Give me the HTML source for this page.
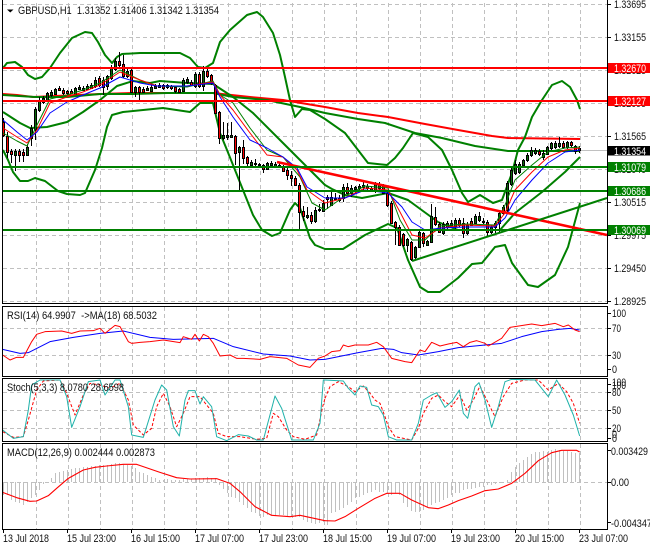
<!DOCTYPE html>
<html><head><meta charset="utf-8"><style>
html,body{margin:0;padding:0;background:#fff;width:650px;height:550px;overflow:hidden}
svg{display:block}
text{font-family:"Liberation Sans",sans-serif;font-size:11px;fill:#111}
.g{stroke:#c0c0c0;stroke-width:1;stroke-dasharray:4 3;fill:none}
.f{fill:none;stroke-linejoin:round}
</style></head><body>
<svg width="650" height="550" viewBox="0 0 650 550" xmlns="http://www.w3.org/2000/svg">
<rect width="650" height="550" fill="#fff"/>
<!-- vertical grid -->
<path class="g" d="M36.5 3V303M68.5 3V303M100.5 3V303M132.5 3V303M164.5 3V303M196.5 3V303M228.5 3V303M260.5 3V303M292.5 3V303M324.5 3V303M356.5 3V303M388.5 3V303M420.5 3V303M452.5 3V303M484.5 3V303M516.5 3V303M548.5 3V303M580.5 3V303"/>
<path class="g" d="M36.5 307V376M68.5 307V376M100.5 307V376M132.5 307V376M164.5 307V376M196.5 307V376M228.5 307V376M260.5 307V376M292.5 307V376M324.5 307V376M356.5 307V376M388.5 307V376M420.5 307V376M452.5 307V376M484.5 307V376M516.5 307V376M548.5 307V376M580.5 307V376"/>
<path class="g" d="M36.5 380V441M68.5 380V441M100.5 380V441M132.5 380V441M164.5 380V441M196.5 380V441M228.5 380V441M260.5 380V441M292.5 380V441M324.5 380V441M356.5 380V441M388.5 380V441M420.5 380V441M452.5 380V441M484.5 380V441M516.5 380V441M548.5 380V441M580.5 380V441"/>
<path class="g" d="M36.5 444V529M68.5 444V529M100.5 444V529M132.5 444V529M164.5 444V529M196.5 444V529M228.5 444V529M260.5 444V529M292.5 444V529M324.5 444V529M356.5 444V529M388.5 444V529M420.5 444V529M452.5 444V529M484.5 444V529M516.5 444V529M548.5 444V529M580.5 444V529"/>
<!-- horizontal grid -->
<path class="g" d="M3 4.5H607M3 37.5H607M3 70.5H607M3 103.5H607M3 136.5H607M3 169.5H607M3 202.5H607M3 235.5H607M3 268.5H607M3 301.5H607M3 328.5H607M3 355.5H607M3 392.5H607M3 410.5H607M3 428.5H607M3 441.5H607M3 482.5H607"/>
<path d="M3 150.5H607" stroke="#c0c0c0" stroke-width="1" fill="none"/>

<!-- long MA red sits under the green one on the left -->
<polyline class="f" stroke="#ff0000" stroke-width="2" points="3,94 17,95 33,97 100,94 133,93 213,93 250,97 283,100 325,107 358,113 388,117 425,124 458,130 492,136 508,138 580,139"/>
<!-- main curves -->
<g class="f" stroke="#008000" stroke-width="2">
<polyline class="f" points="3,68 7,63 15,62 22,67 28,75 35,79 42,77 50,68 60,53 72,38 85,32 92,33 98,42 105,55 112,63 117,57 122,54 140,53 180,53 190,58 198,67 205,68 213,63 220,42 230,30 247,15 257,12 263,17 273,33 280,55 285,77 290,100 295,117 302,109 310,110 325,119 345,133 358,150 368,163 387,165 395,158 403,148 413,133 428,137 442,150 452,170 462,193 468,202 480,195 493,203 502,200 512,173 518,150 525,137 532,117 542,100 552,85 562,81 570,87 577,100 580,109"/>
<polyline class="f" points="3,150 8,160 13,172 20,181 28,181 35,178 45,181 58,191 67,194 80,195 85,193 95,170 102,148 107,127 112,115 123,112 163,108 190,112 200,103 213,103 220,133 227,150 237,175 253,215 262,230 272,236 280,233 290,210 295,203 300,208 310,238 315,245 325,249 343,249 365,235 388,224 397,228 408,260 420,287 428,292 440,292 458,278 472,264 482,263 495,247 505,245 512,263 528,285 538,287 555,275 568,247 580,203"/>
<polyline class="f" points="3,112 20,123 30,128 47,127 67,122 83,112 100,100 117,86 133,81 150,83 160,81 187,83 213,84 233,97 253,113 283,143 300,160 325,185 332,189 345,195 362,198 388,193 408,200 438,222 458,230 482,230 500,230 515,213 542,192 565,172 580,157"/>
<polyline class="f" points="3,95 35,97 67,97 100,94 133,94 167,93 213,93 233,97 267,100 300,107 325,113 358,119 385,123 415,133 442,138 475,146 508,151 580,151"/>
</g>

<!-- wicks -->
<path fill="none" stroke="#000" stroke-width="1" d="M3.5 118V137M7.5 132V158M11.5 149V163M15.5 149V171M19.5 149V162M23.5 149V162M27.5 144V155M31.5 125V146M35.5 107V140M39.5 97V112M43.5 96V104M47.5 92V102M51.5 90V97M55.5 88V95M59.5 86V91M63.5 88V95M67.5 90V95M71.5 89V94M75.5 87V95M79.5 85V90M83.5 86V91M87.5 84V90M91.5 83V89M95.5 77V88M99.5 76V87M103.5 77V95M107.5 75V90M111.5 65V80M115.5 58V71M119.5 52V68M123.5 55V78M127.5 69V78M131.5 68V92M135.5 86V97M139.5 86V100M143.5 87V93M147.5 86V91M151.5 85V92M155.5 84V89M159.5 83V88M163.5 84V90M167.5 84V89M171.5 85V90M175.5 86V93M179.5 88V93M183.5 78V92M187.5 77V84M191.5 80V86M195.5 72V88M199.5 72V88M203.5 66V91M207.5 67V78M211.5 74V85M215.5 84V114M219.5 111V144M223.5 122V140M227.5 123V140M231.5 122V138M235.5 135V165M239.5 146V190M243.5 140V164M247.5 156V167M251.5 160V167M255.5 159V168M259.5 163V168M263.5 164V173M267.5 162V170M271.5 161V167M275.5 162V168M279.5 163V167M283.5 165V172M287.5 168V180M291.5 171V186M295.5 176V186M299.5 183V229M303.5 206V221M307.5 207V219M311.5 212V224M315.5 207V223M319.5 204V212M323.5 200V212M327.5 195V209M331.5 192V205M335.5 193V200M339.5 195V202M343.5 184V202M347.5 183V195M351.5 185V197M355.5 186V193M359.5 184V192M363.5 182V190M367.5 184V190M371.5 186V192M375.5 182V193M379.5 182V190M383.5 184V193M387.5 190V207M391.5 201V224M395.5 221V245M399.5 225V246M403.5 233V247M407.5 238V252M411.5 241V261M415.5 246V260M419.5 230V248M423.5 232V247M427.5 240V246M431.5 204V243M435.5 207V226M439.5 222V233M443.5 222V235M447.5 221V229M451.5 220V227M455.5 218V229M459.5 218V227M463.5 218V238M467.5 222V235M471.5 218V226M475.5 214V224M479.5 212V222M483.5 218V224M487.5 220V237M491.5 225V234M495.5 221V233M499.5 210V232M503.5 205V215M507.5 181V213M511.5 168V186M515.5 160V175M519.5 162V174M523.5 159V167M527.5 153V162M531.5 147V157M535.5 148V155M539.5 149V156M543.5 150V160M547.5 146V155M551.5 142V150M555.5 141V149M559.5 137V148M563.5 141V149M567.5 141V149M571.5 141V148M575.5 145V154M579.5 146V153"/>
<!-- bear bodies -->
<path fill="#ff0000" stroke="#000" stroke-width="1" d="M2.5 122.5h2v13h-2zM6.5 136.5h2v16h-2zM10.5 151.5h2v3h-2zM18.5 151.5h2v4h-2zM22.5 152.5h2v3h-2zM58.5 88.5h2v2h-2zM62.5 90.5h2v3h-2zM66.5 91.5h2v2h-2zM70.5 91.5h2v2h-2zM98.5 78.5h2v7h-2zM102.5 80.5h2v7h-2zM118.5 61.5h2v4h-2zM122.5 64.5h2v12h-2zM130.5 70.5h2v22h-2zM138.5 87.5h2v5h-2zM142.5 89.5h2v3h-2zM162.5 85.5h2v3h-2zM170.5 86.5h2v2h-2zM174.5 87.5h2v4h-2zM178.5 89.5h2v3h-2zM190.5 82.5h2v3h-2zM198.5 74.5h2v12h-2zM206.5 71.5h2v5h-2zM210.5 75.5h2v8h-2zM214.5 85.5h2v28h-2zM218.5 112.5h2v26h-2zM234.5 136.5h2v17h-2zM242.5 147.5h2v11h-2zM246.5 157.5h2v6h-2zM262.5 165.5h2v4h-2zM282.5 166.5h2v5h-2zM286.5 170.5h2v5h-2zM290.5 175.5h2v3h-2zM294.5 178.5h2v7h-2zM298.5 185.5h2v27h-2zM302.5 211.5h2v5h-2zM310.5 215.5h2v6h-2zM326.5 197.5h2v2h-2zM346.5 187.5h2v6h-2zM382.5 186.5h2v7h-2zM386.5 193.5h2v12h-2zM390.5 203.5h2v20h-2zM394.5 222.5h2v5h-2zM398.5 227.5h2v18h-2zM402.5 234.5h2v11h-2zM410.5 242.5h2v17h-2zM422.5 233.5h2v10h-2zM434.5 217.5h2v7h-2zM438.5 224.5h2v8h-2zM458.5 220.5h2v5h-2zM462.5 223.5h2v10h-2zM470.5 221.5h2v4h-2zM486.5 222.5h2v10h-2zM502.5 207.5h2v6h-2zM538.5 151.5h2v3h-2zM562.5 143.5h2v4h-2zM570.5 142.5h2v3h-2zM574.5 146.5h2v5h-2z"/>
<!-- bull bodies -->
<path fill="#0a6b0a" stroke="#000" stroke-width="1" d="M14.5 151.5h2v4h-2zM26.5 147.5h2v8h-2zM30.5 128.5h2v10h-2zM34.5 109.5h2v20h-2zM38.5 101.5h2v9h-2zM42.5 98.5h2v4h-2zM46.5 93.5h2v7h-2zM50.5 92.5h2v3h-2zM54.5 89.5h2v5h-2zM74.5 88.5h2v6h-2zM78.5 87.5h2v2h-2zM82.5 88.5h2v2h-2zM86.5 86.5h2v3h-2zM90.5 85.5h2v3h-2zM94.5 80.5h2v6h-2zM106.5 76.5h2v10h-2zM110.5 67.5h2v11h-2zM114.5 61.5h2v8h-2zM126.5 71.5h2v5h-2zM134.5 87.5h2v5h-2zM146.5 88.5h2v2h-2zM150.5 87.5h2v4h-2zM154.5 86.5h2v2h-2zM158.5 85.5h2v2h-2zM166.5 85.5h2v2h-2zM182.5 80.5h2v11h-2zM186.5 79.5h2v3h-2zM194.5 74.5h2v12h-2zM202.5 71.5h2v15h-2zM222.5 135.5h2v3h-2zM226.5 135.5h2v2h-2zM230.5 135.5h2v2h-2zM238.5 147.5h2v5h-2zM250.5 162.5h2v3h-2zM254.5 163.5h2v1h-2zM258.5 164.5h2v1h-2zM266.5 163.5h2v6h-2zM270.5 163.5h2v2h-2zM274.5 164.5h2v2h-2zM278.5 165.5h2v1h-2zM306.5 215.5h2v2h-2zM314.5 210.5h2v11h-2zM318.5 209.5h2v1h-2zM322.5 203.5h2v8h-2zM330.5 197.5h2v8h-2zM334.5 198.5h2v1h-2zM338.5 198.5h2v2h-2zM342.5 187.5h2v11h-2zM350.5 188.5h2v5h-2zM354.5 187.5h2v2h-2zM358.5 186.5h2v2h-2zM362.5 185.5h2v2h-2zM366.5 186.5h2v2h-2zM370.5 188.5h2v2h-2zM374.5 183.5h2v7h-2zM378.5 184.5h2v4h-2zM406.5 239.5h2v6h-2zM414.5 247.5h2v10h-2zM418.5 232.5h2v15h-2zM426.5 241.5h2v4h-2zM430.5 216.5h2v26h-2zM442.5 224.5h2v9h-2zM446.5 223.5h2v4h-2zM450.5 223.5h2v2h-2zM454.5 220.5h2v6h-2zM466.5 225.5h2v8h-2zM474.5 216.5h2v7h-2zM478.5 216.5h2v4h-2zM482.5 221.5h2v1h-2zM490.5 227.5h2v5h-2zM494.5 223.5h2v4h-2zM498.5 213.5h2v10h-2zM506.5 183.5h2v27h-2zM510.5 170.5h2v14h-2zM514.5 164.5h2v9h-2zM518.5 164.5h2v8h-2zM522.5 160.5h2v5h-2zM526.5 155.5h2v5h-2zM530.5 150.5h2v5h-2zM534.5 150.5h2v3h-2zM542.5 153.5h2v4h-2zM546.5 147.5h2v7h-2zM550.5 143.5h2v5h-2zM554.5 143.5h2v4h-2zM558.5 143.5h2v3h-2zM566.5 142.5h2v5h-2zM578.5 148.5h2v2h-2z"/>

<!-- thin MAs -->
<polyline class="f" stroke="#008000" stroke-width="1" points="3,133 17,141 27,146 37,125 50,99 67,95 83,90 100,83 120,70 140,80 157,86 187,87 213,81 220,95 233,103 250,128 267,150 283,157 300,177 312,203 325,210 345,196 365,186 388,188 400,220 412,240 425,240 440,226 465,224 495,225 505,205 515,180 532,165 548,152 565,148 580,147"/>
<polyline class="f" stroke="#ff0000" stroke-width="1" points="3,128 17,137 27,143 37,130 50,103 67,97 83,92 100,85 120,72 140,80 157,86 187,86 213,82 220,95 233,110 250,133 267,155 283,157 297,170 307,190 325,203 345,198 365,188 388,190 400,212 412,235 425,238 440,228 465,225 495,226 505,213 515,190 532,172 548,157 565,150 580,148"/>
<polyline class="f" stroke="#0000ff" stroke-width="1" points="3,120 17,132 27,140 37,132 50,113 67,102 83,95 100,88 120,77 140,83 157,86 187,86 213,83 220,97 233,117 250,140 267,148 283,157 297,168 307,187 325,198 345,198 365,190 388,193 402,207 412,222 425,230 442,228 465,227 495,227 505,218 515,200 532,180 548,163 565,152 580,150"/>

<!-- trend lines & levels -->
<path fill="none" stroke="#ff0000" stroke-width="2.6" d="M277 162L607 235"/>
<path fill="none" stroke="#008000" stroke-width="2" d="M412 261L607 198"/>
<path fill="none" stroke="#ff0000" stroke-width="2" d="M3 68H607M3 101H607"/>
<path fill="none" stroke="#008000" stroke-width="2" d="M3 167H607M3 191H607M3 230H607"/>

<!-- RSI -->
<g transform="translate(0 300) scale(.33333)" fill="none" stroke-width="3" stroke-linejoin="round">
<polyline stroke="#0000ff" points="8,148 60,160 85,158 150,125 220,112 300,100 370,93 450,112 520,118 640,115 700,140 790,162 870,168 930,180 975,178"/>
<polyline stroke="#ff0000" points="8,165 30,180 50,172 70,172 95,125 110,103 135,95 185,93 215,100 240,93 280,92 300,85 315,100 345,76 360,80 385,125 395,130 420,127 450,125 490,120 540,128 550,110 575,118 585,103 598,123 610,103 625,110 640,130 660,168 690,165 710,175 730,175 780,178 810,170 860,175 895,195 930,202 955,175 975,168"/>
</g>
<g transform="translate(325 300) scale(.33333)" fill="none" stroke-width="3" stroke-linejoin="round">
<polyline stroke="#0000ff" points="0,178 50,168 100,158 170,145 205,148 230,158 280,165 340,155 400,143 480,135 530,130 590,110 650,95 700,88 735,85 764,90"/>
<polyline stroke="#ff0000" points="0,168 20,155 45,152 55,135 70,140 90,135 130,135 155,127 175,140 200,175 240,185 260,188 285,150 300,155 320,127 345,138 370,132 395,127 415,140 435,127 455,122 480,130 490,138 530,115 555,82 620,72 650,77 690,70 715,80 730,75 750,90 764,95"/>
</g>

<!-- Stoch -->
<g transform="translate(0 300) scale(.33333)" fill="none" stroke-width="3" stroke-linejoin="round">
<polyline stroke="#ff0000" stroke-dasharray="9 6" points="8,395 40,412 70,410 85,360 110,270 130,243 180,240 200,280 225,345 250,285 270,250 300,255 330,265 360,250 385,300 400,375 430,405 455,385 470,320 490,280 510,320 530,380 550,340 570,290 600,290 640,340 655,400 680,410 720,410 770,418 800,415 820,340 835,350 860,390 880,410 915,418 950,405 968,320 975,295"/>
<polyline stroke="#20b2aa" points="8,390 40,415 70,410 85,330 95,255 120,240 180,240 200,290 215,382 240,320 265,245 300,240 315,285 345,240 360,240 385,320 395,405 430,412 465,300 485,255 500,270 520,380 538,408 555,300 565,272 585,272 600,312 610,290 635,320 650,410 680,422 715,404 745,408 770,420 790,420 825,288 845,325 875,420 940,420 960,370 970,240 975,240"/>
</g>
<g transform="translate(325 300) scale(.33333)" fill="none" stroke-width="3" stroke-linejoin="round">
<polyline stroke="#ff0000" stroke-dasharray="9 6" points="0,295 15,260 40,245 70,260 90,275 115,258 135,280 150,300 165,310 180,350 190,380 210,410 260,420 280,385 295,340 320,295 340,285 360,305 380,320 405,285 425,330 445,300 465,258 490,310 510,350 535,290 560,250 600,240 640,240 670,270 700,250 725,275 745,310 764,370"/>
<polyline stroke="#20b2aa" points="0,240 55,243 70,265 90,285 105,258 125,262 140,315 160,320 175,345 190,410 215,420 260,420 280,370 295,300 320,285 335,278 360,322 380,305 403,270 415,340 428,355 450,260 462,248 480,300 500,382 520,320 540,245 560,238 630,240 670,290 695,240 720,285 745,345 764,408"/>
</g>

<!-- MACD histogram -->
<path fill="none" stroke="#c0c0c0" stroke-width="1" d="M3.5 482V495M7.5 482V495M11.5 482V500M15.5 482V502M19.5 482V503M23.5 482V505M27.5 482V502M31.5 482V498M35.5 482V495M39.5 482V490M43.5 482V484M51.5 482V478M55.5 482V473M59.5 482V472M63.5 482V471M67.5 482V470M71.5 482V469M75.5 482V468M79.5 482V468M83.5 482V467M87.5 482V467M91.5 482V466M95.5 482V466M99.5 482V465M103.5 482V465M107.5 482V465M111.5 482V464M115.5 482V463M119.5 482V463M123.5 482V464M127.5 482V465M131.5 482V466M135.5 482V468M139.5 482V472M143.5 482V473M147.5 482V475M151.5 482V477M155.5 482V478M159.5 482V480M163.5 482V480M167.5 482V479M171.5 482V480M175.5 482V480M179.5 482V480M183.5 482V479M187.5 482V479M191.5 482V479M195.5 482V478M199.5 482V478M203.5 482V478M207.5 482V477M211.5 482V478M215.5 482V478M219.5 482V485M223.5 482V489M227.5 482V493M231.5 482V497M235.5 482V498M239.5 482V502M243.5 482V505M247.5 482V508M251.5 482V512M255.5 482V513M259.5 482V516M263.5 482V517M267.5 482V515M271.5 482V515M275.5 482V515M279.5 482V515M283.5 482V515M287.5 482V516M291.5 482V517M295.5 482V517M299.5 482V517M303.5 482V520M307.5 482V522M311.5 482V523M315.5 482V524M319.5 482V523M323.5 482V522M327.5 482V525M331.5 482V513M335.5 482V512M339.5 482V510M343.5 482V508M347.5 482V505M351.5 482V502M355.5 482V498M359.5 482V497M363.5 482V495M367.5 482V493M371.5 482V492M375.5 482V490M379.5 482V492M383.5 482V492M387.5 482V493M391.5 482V495M395.5 482V493M399.5 482V495M403.5 482V503M407.5 482V507M411.5 482V511M415.5 482V512M419.5 482V512M423.5 482V510M427.5 482V507M431.5 482V505M435.5 482V503M439.5 482V502M443.5 482V500M447.5 482V498M451.5 482V495M455.5 482V493M459.5 482V493M463.5 482V490M467.5 482V489M471.5 482V489M475.5 482V488M479.5 482V487M483.5 482V487M487.5 482V485M491.5 482V485M495.5 482V484M499.5 482V483M503.5 482V483M507.5 482V480M511.5 482V472M515.5 482V467M519.5 482V463M523.5 482V460M527.5 482V457M531.5 482V454M535.5 482V452M539.5 482V452M543.5 482V451M547.5 482V452M551.5 482V450M555.5 482V449M559.5 482V450M563.5 482V451M567.5 482V451M571.5 482V452M575.5 482V453M579.5 482V453"/>
<g transform="translate(0 430) scale(.33333)" fill="none" stroke="#ff0000" stroke-width="3.3" stroke-linejoin="round"><polyline points="8,187 50,203 90,214 110,213 145,197 170,175 205,145 250,120 285,112 320,108 370,103 410,103 480,127 530,143 570,147 650,146 690,160 720,185 765,230 815,256 870,260 900,256 975,272"/></g>
<g transform="translate(325 430) scale(.33333)" fill="none" stroke="#ff0000" stroke-width="3.3" stroke-linejoin="round"><polyline points="0,272 30,273 60,260 100,235 150,205 185,190 225,190 260,210 310,233 340,236 370,225 400,212 440,198 480,182 520,177 560,160 600,130 640,92 680,68 710,61 755,61 764,66"/></g>

<!-- frames -->
<path fill="none" stroke="#000" stroke-width="1" d="M2.5 0V303.5H607.5V0M2.5 306.5H607.5V376.5H2.5ZM2.5 378.5H607.5V441.5H2.5ZM2.5 443.5H607.5V529.5H2.5Z"/>
<path fill="none" stroke="#000" stroke-width="1" d="M607 4.5h4M607 37.5h4M607 70.5h4M607 103.5h4M607 136.5h4M607 169.5h4M607 202.5h4M607 235.5h4M607 268.5h4M607 301.5h4M607 313.5h4M607 328.5h4M607 355.5h4M607 369.5h4M607 384.5h4M607 392.5h4M607 410.5h4M607 428.5h4M607 438.5h4M607 450.5h4M607 482.5h4M607 522.5h4M3.5 529v4M67.5 529v4M131.5 529v4M195.5 529v4M259.5 529v4M323.5 529v4M387.5 529v4M451.5 529v4M515.5 529v4M579.5 529v4"/>

<!-- title -->
<path d="M7 9.5h6.5l-3.25 3z" fill="#000"/>
<text x="18" y="14" textLength="201" lengthAdjust="spacingAndGlyphs" xml:space="preserve">GBPUSD,H1  1.31352 1.31406 1.31342 1.31354</text>
<text x="7" y="319" textLength="150" lengthAdjust="spacingAndGlyphs" xml:space="preserve">RSI(14) 64.9907  -&gt;MA(18) 68.5032</text>
<text x="7" y="391" textLength="117" lengthAdjust="spacingAndGlyphs">Stoch(5,3,3) 8.0780 28.6598</text>
<text x="7" y="456" textLength="148" lengthAdjust="spacingAndGlyphs">MACD(12,26,9) 0.002444 0.002873</text>

<!-- price axis -->
<g>
<text x="614" y="8" textLength="32" lengthAdjust="spacingAndGlyphs">1.33695</text>
<text x="614" y="41" textLength="32" lengthAdjust="spacingAndGlyphs">1.33155</text>
<text x="614" y="74" textLength="32" lengthAdjust="spacingAndGlyphs">1.32625</text>
<text x="614" y="107" textLength="32" lengthAdjust="spacingAndGlyphs">1.32095</text>
<text x="614" y="140" textLength="32" lengthAdjust="spacingAndGlyphs">1.31565</text>
<text x="614" y="173" textLength="32" lengthAdjust="spacingAndGlyphs">1.31040</text>
<text x="614" y="206" textLength="32" lengthAdjust="spacingAndGlyphs">1.30515</text>
<text x="614" y="239" textLength="32" lengthAdjust="spacingAndGlyphs">1.29975</text>
<text x="614" y="272" textLength="32" lengthAdjust="spacingAndGlyphs">1.29450</text>
<text x="614" y="305" textLength="32" lengthAdjust="spacingAndGlyphs">1.28925</text>
</g>
<rect x="608" y="63" width="42" height="10" fill="#ff0000"/>
<rect x="608" y="96" width="42" height="10" fill="#ff0000"/>
<rect x="608" y="146" width="42" height="9.5" fill="#000"/>
<rect x="608" y="162" width="42" height="10" fill="#008000"/>
<rect x="608" y="186" width="42" height="10" fill="#008000"/>
<rect x="608" y="225" width="42" height="10" fill="#008000"/>
<text style="fill:#fff" x="614" y="72" textLength="32" lengthAdjust="spacingAndGlyphs">1.32670</text>
<text style="fill:#fff" x="614" y="105" textLength="32" lengthAdjust="spacingAndGlyphs">1.32127</text>
<text style="fill:#fff" x="614" y="155" textLength="32" lengthAdjust="spacingAndGlyphs">1.31354</text>
<text style="fill:#fff" x="614" y="171" textLength="32" lengthAdjust="spacingAndGlyphs">1.31079</text>
<text style="fill:#fff" x="614" y="195" textLength="32" lengthAdjust="spacingAndGlyphs">1.30686</text>
<text style="fill:#fff" x="614" y="234" textLength="32" lengthAdjust="spacingAndGlyphs">1.30069</text>

<!-- indicator axes -->
<text x="612" y="317" textLength="14" lengthAdjust="spacingAndGlyphs">100</text>
<text x="612" y="332" textLength="9" lengthAdjust="spacingAndGlyphs">70</text>
<text x="612" y="359" textLength="9" lengthAdjust="spacingAndGlyphs">30</text>
<text x="612" y="373" textLength="5" lengthAdjust="spacingAndGlyphs">0</text>
<text x="612" y="386" textLength="14" lengthAdjust="spacingAndGlyphs">100</text>
<text x="612" y="389" textLength="14" lengthAdjust="spacingAndGlyphs">100</text>
<text x="612" y="396" textLength="9" lengthAdjust="spacingAndGlyphs">80</text>
<text x="612" y="414" textLength="9" lengthAdjust="spacingAndGlyphs">50</text>
<text x="612" y="432" textLength="9" lengthAdjust="spacingAndGlyphs">20</text>
<text x="612" y="438" textLength="5" lengthAdjust="spacingAndGlyphs">0</text>
<text x="612" y="442" textLength="5" lengthAdjust="spacingAndGlyphs">0</text>
<text x="611" y="455" textLength="37" lengthAdjust="spacingAndGlyphs">0.003429</text>
<text x="611" y="486" textLength="18" lengthAdjust="spacingAndGlyphs">0.00</text>
<text x="611" y="527" textLength="41" lengthAdjust="spacingAndGlyphs">-0.004347</text>

<!-- time axis -->
<text x="3" y="542" textLength="46" lengthAdjust="spacingAndGlyphs">13 Jul 2018</text>
<text x="67" y="542" textLength="49" lengthAdjust="spacingAndGlyphs">15 Jul 23:00</text>
<text x="131" y="542" textLength="49" lengthAdjust="spacingAndGlyphs">16 Jul 15:00</text>
<text x="195" y="542" textLength="49" lengthAdjust="spacingAndGlyphs">17 Jul 07:00</text>
<text x="259" y="542" textLength="49" lengthAdjust="spacingAndGlyphs">17 Jul 23:00</text>
<text x="323" y="542" textLength="49" lengthAdjust="spacingAndGlyphs">18 Jul 15:00</text>
<text x="387" y="542" textLength="49" lengthAdjust="spacingAndGlyphs">19 Jul 07:00</text>
<text x="451" y="542" textLength="49" lengthAdjust="spacingAndGlyphs">19 Jul 23:00</text>
<text x="515" y="542" textLength="49" lengthAdjust="spacingAndGlyphs">20 Jul 15:00</text>
<text x="579" y="542" textLength="49" lengthAdjust="spacingAndGlyphs">23 Jul 07:00</text>
</svg>
</body></html>
